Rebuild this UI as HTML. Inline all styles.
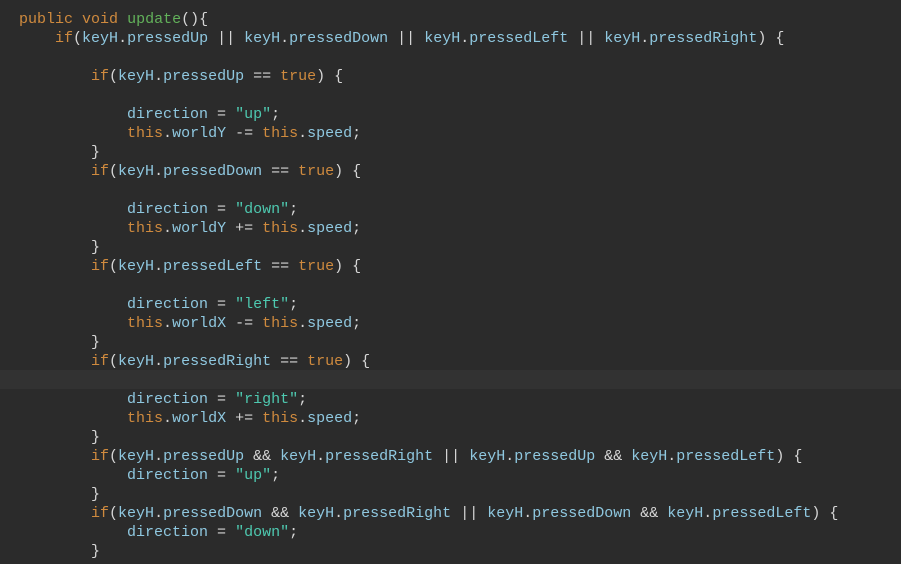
<!DOCTYPE html>
<html><head><meta charset="utf-8"><style>
html,body{margin:0;padding:0;background:#2b2b2b;width:901px;height:564px;overflow:hidden}
.hl{position:absolute;left:0;top:370px;width:901px;height:19px;background:#323232}
pre{position:absolute;left:19px;top:10px;margin:0;font-family:"Liberation Mono",monospace;font-size:15px;line-height:19px;color:#d6d6d6}
.k{color:#cf8a3e}.i{color:#8fc8e0}.s{color:#4ec9b0}.f{color:#62b15a}
</style></head><body><div class="hl"></div>
<pre><span class="k">public</span> <span class="k">void</span> <span class="f">update</span>(){
    <span class="k">if</span>(<span class="i">keyH</span>.<span class="i">pressedUp</span> || <span class="i">keyH</span>.<span class="i">pressedDown</span> || <span class="i">keyH</span>.<span class="i">pressedLeft</span> || <span class="i">keyH</span>.<span class="i">pressedRight</span>) {

        <span class="k">if</span>(<span class="i">keyH</span>.<span class="i">pressedUp</span> == <span class="k">true</span>) {

            <span class="i">direction</span> = <span class="s">"up"</span>;
            <span class="k">this</span>.<span class="i">worldY</span> -= <span class="k">this</span>.<span class="i">speed</span>;
        }
        <span class="k">if</span>(<span class="i">keyH</span>.<span class="i">pressedDown</span> == <span class="k">true</span>) {

            <span class="i">direction</span> = <span class="s">"down"</span>;
            <span class="k">this</span>.<span class="i">worldY</span> += <span class="k">this</span>.<span class="i">speed</span>;
        }
        <span class="k">if</span>(<span class="i">keyH</span>.<span class="i">pressedLeft</span> == <span class="k">true</span>) {

            <span class="i">direction</span> = <span class="s">"left"</span>;
            <span class="k">this</span>.<span class="i">worldX</span> -= <span class="k">this</span>.<span class="i">speed</span>;
        }
        <span class="k">if</span>(<span class="i">keyH</span>.<span class="i">pressedRight</span> == <span class="k">true</span>) {

            <span class="i">direction</span> = <span class="s">"right"</span>;
            <span class="k">this</span>.<span class="i">worldX</span> += <span class="k">this</span>.<span class="i">speed</span>;
        }
        <span class="k">if</span>(<span class="i">keyH</span>.<span class="i">pressedUp</span> &amp;&amp; <span class="i">keyH</span>.<span class="i">pressedRight</span> || <span class="i">keyH</span>.<span class="i">pressedUp</span> &amp;&amp; <span class="i">keyH</span>.<span class="i">pressedLeft</span>) {
            <span class="i">direction</span> = <span class="s">"up"</span>;
        }
        <span class="k">if</span>(<span class="i">keyH</span>.<span class="i">pressedDown</span> &amp;&amp; <span class="i">keyH</span>.<span class="i">pressedRight</span> || <span class="i">keyH</span>.<span class="i">pressedDown</span> &amp;&amp; <span class="i">keyH</span>.<span class="i">pressedLeft</span>) {
            <span class="i">direction</span> = <span class="s">"down"</span>;
        }
</pre></body></html>
